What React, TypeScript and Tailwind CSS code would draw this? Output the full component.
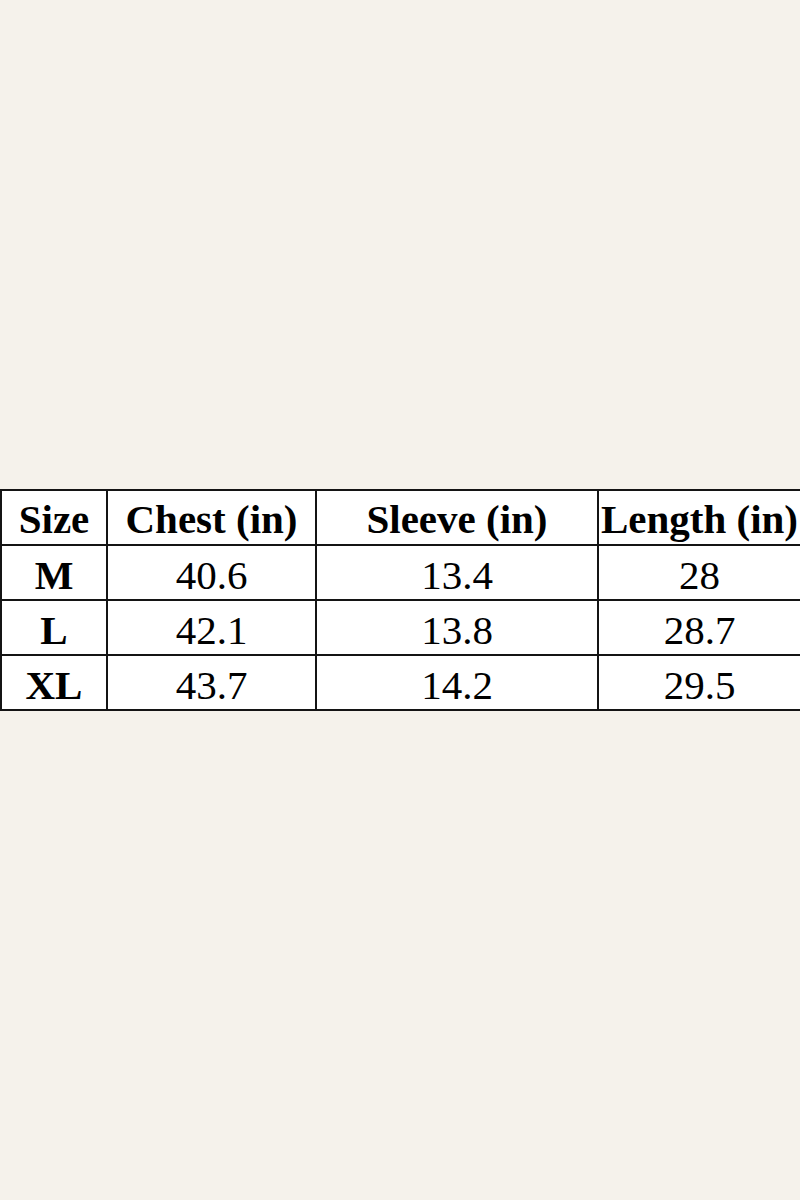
const rows = [
  { size: 'M', chest: '40.6', sleeve: '13.4', length: '28' },
  { size: 'L', chest: '42.1', sleeve: '13.8', length: '28.7' },
  { size: 'XL', chest: '43.7', sleeve: '14.2', length: '29.5' },
];

export default function App() {
  return (
    <main className="h-[1200px] w-[800px] bg-[#f5f2eb] flex items-center">
      <table
        className="w-[800px] table-fixed border-collapse bg-white text-black text-[41px] leading-[44px]"
        style={{ fontFamily: '"Liberation Serif", "Times New Roman", serif' }}
      >
        <colgroup>
          <col className="w-[106px]" />
          <col className="w-[209px]" />
          <col className="w-[282px]" />
          <col className="w-[203px]" />
        </colgroup>
        <thead>
          <tr className="h-[55px]">
            <th className="border-2 border-[#141414] font-bold text-center p-0 pt-[2px]">Size</th>
            <th className="border-2 border-[#141414] font-bold text-center p-0 pt-[2px]">Chest (in)</th>
            <th className="border-2 border-[#141414] font-bold text-center p-0 pt-[2px]">Sleeve (in)</th>
            <th className="border-2 border-[#141414] font-bold text-center p-0 pt-[2px] whitespace-nowrap">Length (in)</th>
          </tr>
        </thead>
        <tbody>
          {rows.map((r) => (
            <tr key={r.size} className="h-[55px]">
              <td className="border-2 border-[#141414] font-bold text-center p-0 pt-[5px]">{r.size}</td>
              <td className="border-2 border-[#141414] text-center p-0 pt-[5px]">{r.chest}</td>
              <td className="border-2 border-[#141414] text-center p-0 pt-[5px]">{r.sleeve}</td>
              <td className="border-2 border-[#141414] text-center p-0 pt-[5px]">{r.length}</td>
            </tr>
          ))}
        </tbody>
      </table>
    </main>
  );
}
